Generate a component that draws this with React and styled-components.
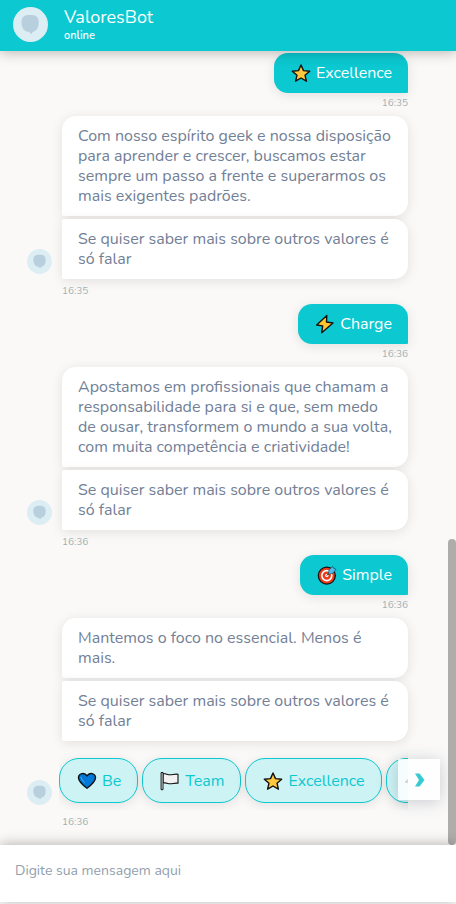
import React from 'react';
import styled, { createGlobalStyle } from 'styled-components';

const teal = '#0cc8d0';

const GlobalStyle = createGlobalStyle`
  *, *::before, *::after { box-sizing: border-box; }
  body {
    margin: 0;
    background: #faf9f8;
    font-family: Nunito, "Nunito Sans", "Open Sans", sans-serif;
    font-size: 16px;
    line-height: 20px;
  }
  button, input { font: inherit; }
`;

const Page = styled.div`
  display: flex;
  flex-direction: column;
  min-height: 100vh;
  padding-bottom: 2px;
`;

const Header = styled.header`
  position: relative;
  z-index: 2;
  display: flex;
  align-items: center;
  gap: 16px;
  height: 51px;
  padding: 0 13px 2px;
  background: ${teal};
  color: #fff;
  box-shadow: 0 2px 12px rgba(0, 0, 0, 0.25);
`;

const Title = styled.h1`
  margin: 0;
  font-size: 18px;
  line-height: 22px;
  font-weight: 400;
`;

const Status = styled.p`
  margin: 0;
  font-size: 11px;
  line-height: 16px;
  font-weight: 600;
`;

const AvatarCircle = styled.span`
  display: grid;
  place-items: center;
  flex: none;
  width: ${(p) => p.$size}px;
  height: ${(p) => p.$size}px;
  border-radius: 50%;
  background: #dcedf3;

  svg {
    width: 52%;
    height: 60%;
  }
`;

const ChatArea = styled.div`
  position: relative;
  flex: 1;
`;

const Messages = styled.main`
  display: flex;
  flex-direction: column;
  padding: 2px 48px 10px 27px;
`;

const Scrollbar = styled.div`
  position: absolute;
  top: 0;
  right: 0;
  bottom: 0;
  width: 8px;
  display: flex;
  align-items: flex-end;

  &::after {
    content: '';
    width: 100%;
    height: 38.5%;
    border-radius: 4px;
    background: #aeadac;
  }
`;

const Time = styled.time`
  display: block;
  font-size: 10px;
  line-height: 12px;
  color: #a0b2b6;
`;

const UserMessage = styled.div`
  display: flex;
  flex-direction: column;
  align-items: flex-end;
  gap: 4px;
  margin-bottom: 7px;
`;

const BotMessage = styled.div`
  display: grid;
  grid-template-columns: 25px minmax(0, 1fr);
  column-gap: 10px;
  row-gap: 6px;
  align-items: end;
  margin-bottom: 7px;

  > ${AvatarCircle} { margin-bottom: 5px; }
  > ${Time} { grid-column: 2; }
`;

const Stack = styled.div`
  display: flex;
  flex-direction: column;
  gap: 3px;
  min-width: 0;
`;

const Bubble = styled.div`
  padding: 10px 16px;
  color: #728096;
  background: #fff;
  border-radius: ${(p) => (p.$first ? '14px 14px 14px 2px' : '2px 14px 14px 2px')};
  box-shadow: 0 2px 12px rgba(0, 0, 0, 0.1);
`;

const UserBubble = styled.div`
  display: flex;
  align-items: center;
  gap: 4px;
  padding: 10px 16px;
  color: #fff;
  background: ${teal};
  border-radius: 14px 14px 1px 14px;
  box-shadow: 0 2px 12px rgba(0, 0, 0, 0.1);
`;

const Emoji = styled.svg`
  flex: none;
  width: 22px;
  height: 20px;
`;

const Carousel = styled.div`
  position: relative;
  margin: 0 0 0 -3px;
`;

const Chips = styled.div`
  display: flex;
  gap: 4px;
  overflow: hidden;
  padding: 14px 0 7px;
`;

const Chip = styled.button`
  display: flex;
  flex: none;
  align-items: center;
  gap: 4px;
  height: 45px;
  padding: 0 16px;
  border: 1px solid ${teal};
  border-radius: 20px;
  background: #cef3f4;
  color: ${teal};
  box-shadow: 0 2px 12px rgba(0, 0, 0, 0.1);
  cursor: pointer;
`;

const NextButton = styled.button`
  position: absolute;
  top: 15px;
  right: -32px;
  display: grid;
  place-items: center;
  width: 42px;
  height: 41px;
  padding: 0 0 0 2px;
  border: 0;
  background: rgba(255, 255, 255, 0.8);
  box-shadow: 0 2px 16px rgba(60, 70, 100, 0.25);
  cursor: pointer;
`;

const Composer = styled.footer`
  position: relative;
  z-index: 1;
  background: #fff;
  box-shadow: 0 -1px 12px rgba(0, 0, 0, 0.28);
`;

const MessageInput = styled.input`
  display: block;
  width: 100%;
  height: 57px;
  padding: 0 15px 6px;
  border: 0;
  outline: 0;
  background: transparent;
  font-size: 14px;
  color: #728096;

  &::placeholder { color: #929fae; opacity: 1; }
`;

function Avatar({ size }) {
  return (
    <AvatarCircle $size={size}>
      <svg viewBox="0 0 18 20" aria-hidden="true">
        <path
          d="M9 .5C14.500.5 17.500 2 17.500 8c0 5.500-2 8.500-6 9.300L9.700 19.800 8.500 17.500C3.500 17 .5 14 .5 8 .5 2 3.500.5 9 .5Z"
          fill="#b8cfdd"
        />
      </svg>
    </AvatarCircle>
  );
}

const outline = { stroke: '#111', strokeWidth: 1.4, strokeLinejoin: 'round', strokeLinecap: 'round' };

const drawings = {
  star: (
    <path {...outline} fill="#ffc83d" d="M11 2l2.500 5.600 6.200.6-4.700 4 1.400 6L11 15l-5.400 3.200 1.400-6-4.700-4 6.200-.6z" />
  ),
  bolt: (
    <path {...outline} fill="#ffc52e" d="M12.800 1.500L2.700 11l6 .9-1 6.800L19 9l-6.500-1z" />
  ),
  heart: (
    <>
      <path {...outline} fill="#0078d7" d="M11 17.300C6 13.500 2.500 10.300 2.500 6.800c0-4.600 6-6 8.500-1.900 2.500-4.100 8.500-2.700 8.500 1.900 0 3.500-3.500 6.700-8.500 10.500Z" />
      <path d="M5 5.800c.3 2.200 2 4.200 3.800 5.800" fill="none" stroke="#60acee" strokeWidth="1" />
    </>
  ),
  flag: (
    <>
      <path {...outline} strokeWidth="1.100" fill="#f3f2f2" d="M4 2.500c4 .1 4 1.500 7.700 1.300 2.500-.2 4-1 7.300-.6v9c-3.500-.4-4.800.5-7.300.6-3.500.1-4-1.200-7.700-1.200z" />
      <path {...outline} strokeWidth="1" fill="#fff" d="M2.500 1.500H4v17.200H2.500z" />
    </>
  ),
  target: (
    <>
      <circle cx="10.800" cy="10.600" r="8.500" fill="#f03a17" stroke="#111" strokeWidth="1.300" />
      <circle cx="10.800" cy="10.600" r="5" fill="#f03a17" stroke="#fff" strokeWidth="1.600" />
      <circle cx="10.800" cy="10.600" r="1.700" fill="#fff" />
      <path d="M10.800 10.600l4-4" stroke="#111" strokeWidth="1" />
      <path d="M12.300 8.800l.8-4.300 3.900-3 .8 2 2.200.7-3 4-3.700.9z" fill="#4ebce9" stroke="#174960" strokeWidth=".7" strokeLinejoin="round" />
    </>
  ),
};

function Icon({ name }) {
  return (
    <Emoji viewBox="0 0 22 20" aria-hidden="true">
      {drawings[name]}
    </Emoji>
  );
}

function UserTurn({ icon, text, time }) {
  return (
    <UserMessage>
      <UserBubble>
        <Icon name={icon} />
        <span>{text}</span>
      </UserBubble>
      <Time>{time}</Time>
    </UserMessage>
  );
}

function BotTurn({ texts, time, children }) {
  return (
    <BotMessage>
      <Avatar size={25} />
      <Stack>
        {texts.map((text, i) => (
          <Bubble key={text} $first={i === 0}>{text}</Bubble>
        ))}
        {children}
      </Stack>
      <Time>{time}</Time>
    </BotMessage>
  );
}

const followUp = 'Se quiser saber mais sobre outros valores é só falar';

const options = [
  { icon: 'heart', label: 'Be' },
  { icon: 'flag', label: 'Team' },
  { icon: 'star', label: 'Excellence' },
  { icon: 'bolt', label: 'Charge' },
];

export default function App() {
  return (
    <Page>
      <GlobalStyle />
      <Header>
        <Avatar size={35} />
        <div>
          <Title>ValoresBot</Title>
          <Status>online</Status>
        </div>
      </Header>
      <ChatArea>
        <Messages>
          <UserTurn icon="star" text="Excellence" time="16:35" />
          <BotTurn
            time="16:35"
            texts={[
              'Com nosso espírito geek e nossa disposição para aprender e crescer, buscamos estar sempre um passo a frente e superarmos os mais exigentes padrões.',
              followUp,
            ]}
          />
          <UserTurn icon="bolt" text="Charge" time="16:36" />
          <BotTurn
            time="16:36"
            texts={[
              'Apostamos em profissionais que chamam a responsabilidade para si e que, sem medo de ousar, transformem o mundo a sua volta, com muita competência e criatividade!',
              followUp,
            ]}
          />
          <UserTurn icon="target" text="Simple" time="16:36" />
          <BotTurn time="16:36" texts={['Mantemos o foco no essencial. Menos é mais.', followUp]}>
            <Carousel>
              <Chips>
                {options.map((o) => (
                  <Chip key={o.label} type="button">
                    <Icon name={o.icon} />
                    <span>{o.label}</span>
                  </Chip>
                ))}
              </Chips>
              <NextButton type="button" aria-label="Próximo">
                <svg width="12" height="16" viewBox="0 0 12 16" aria-hidden="true">
                  <path d="M1 1.500h4.500L10.500 8l-5 6.500H1L5 8z" fill="#36cbd1" />
                </svg>
              </NextButton>
            </Carousel>
          </BotTurn>
        </Messages>
        <Scrollbar />
      </ChatArea>
      <Composer>
        <MessageInput type="text" aria-label="Mensagem" placeholder="Digite sua mensagem aqui" />
      </Composer>
    </Page>
  );
}
